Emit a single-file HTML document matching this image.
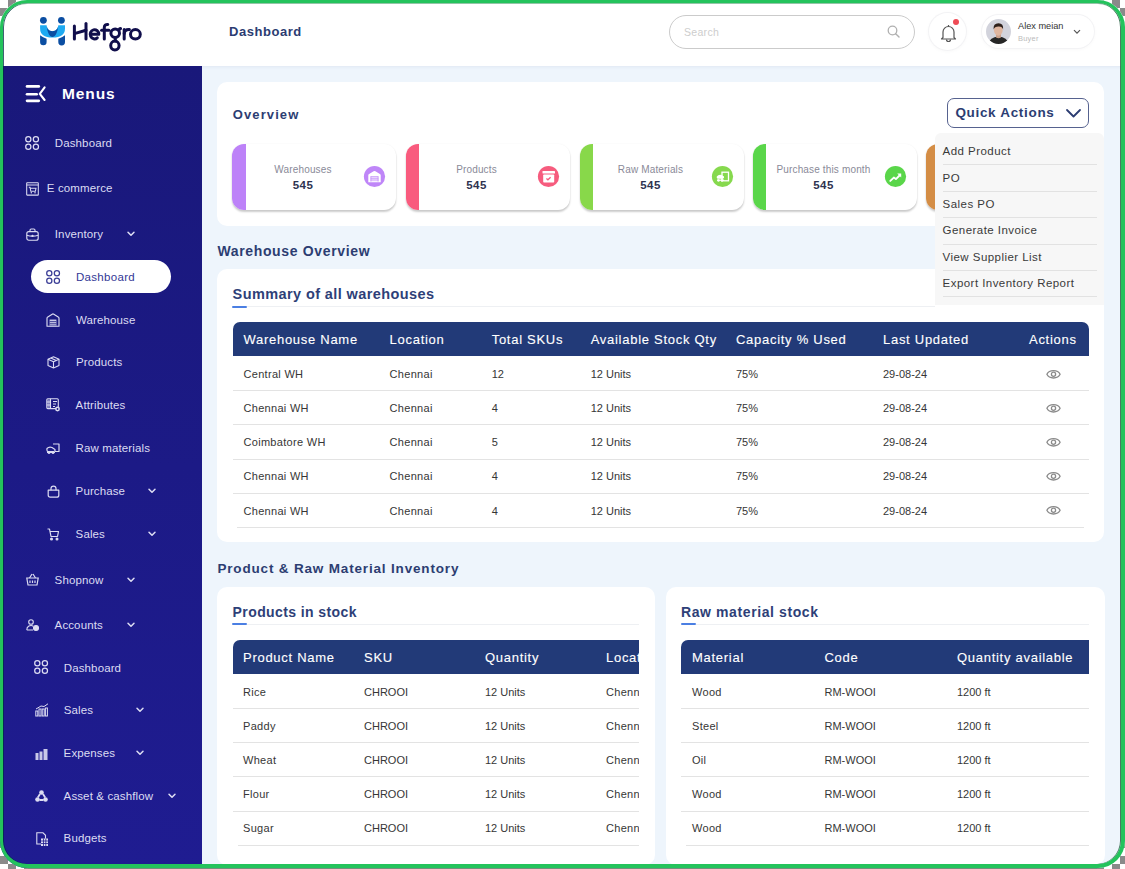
<!DOCTYPE html><html><head><meta charset="utf-8"><style>
*{box-sizing:border-box;margin:0;padding:0}
html,body{width:1125px;height:869px;overflow:hidden}
body{font-family:"Liberation Sans",sans-serif;position:relative;background-color:#fff;
background-image:linear-gradient(45deg,#8a8a8a 25%,transparent 25%,transparent 75%,#8a8a8a 75%),linear-gradient(45deg,#8a8a8a 25%,transparent 25%,transparent 75%,#8a8a8a 75%);
background-size:16px 16px;background-position:0 0,8px 8px}
.abs{position:absolute;overflow:visible}
#app{position:absolute;left:0;top:0;width:1125px;height:868px;border-radius:27px;overflow:hidden;background:#eef5fc}
#frame{position:absolute;left:0;top:0;width:1125px;height:868px;border-radius:27px;border:3px solid #24c35c;border-right-width:4px;border-bottom-width:4px;z-index:100;box-shadow:inset 1px 0 0 rgba(0,45,70,0.75),inset -1px 0 0 rgba(30,90,60,0.8),inset 0 1px 0 rgba(40,140,80,0.5)}
#header{position:absolute;left:0;top:0;width:1125px;height:66px;background:#fff;box-shadow:0 1px 3px rgba(120,140,170,0.12)}
#sidebar{position:absolute;left:0;top:66px;width:202px;height:802px;background:linear-gradient(180deg,#19187a 0%,#1c1a86 50%,#1f1c91 100%)}
.card{position:absolute;background:#fff;border-radius:10px}
.t{position:absolute;white-space:nowrap}
.stat{position:absolute;top:144px;width:164px;height:66px;border-radius:12px;background:#fff;box-shadow:0 2px 2px rgba(0,0,0,0.2),0 0 2px rgba(0,0,0,0.05);overflow:hidden}
.stat .bar{position:absolute;left:0;top:0;width:13.5px;height:66px}
.hdr{position:absolute;background:#223a78;border-radius:7px 7px 0 0}
.sep{position:absolute;height:1px;background:#e3e3e3}
</style></head><body><div id="app">
<div id="header"></div>
<svg class="abs" style="left:36px;top:14px;" width="34" height="34" viewBox="0 0 34 34">
<circle cx="7.4" cy="6.3" r="3.4" fill="#0b4ea2"/><circle cx="25.4" cy="6.3" r="3.4" fill="#0b4ea2"/>
<path d="M4.1 21.2 Q7 23.6 10.6 24.8 V28.1 A3.25 3.25 0 0 1 4.1 28.1 Z" fill="#0b4ea2"/>
<path d="M29 21.2 Q26 23.6 22.3 24.8 V28.1 A3.35 3.35 0 0 0 29 28.1 Z" fill="#0b4ea2"/>
<path d="M4.1 11.2 H10.6 C11.3 19.2 21.6 19.2 22.3 11.2 H29 V14.5 Q29 23.6 16.5 23.6 Q4.1 23.6 4.1 14.5 Z" fill="#1eaaf1" stroke="#fff" stroke-width="1.1" paint-order="stroke"/>
<path d="M10.7 11.6 C11.3 19.6 14 23 16.45 23 C18.9 23 21.6 19.6 22.2 11.6 C21.6 19.2 11.3 19.2 10.7 11.6 Z" fill="#0b4ea2"/>
</svg>
<svg class="abs" style="left:0px;top:0px;" width="160" height="60" viewBox="0 0 160 60"><g fill="none" stroke="#100e4b" stroke-width="3" stroke-linecap="round" stroke-linejoin="round"><path d="M74.4 26 V39"/><path d="M86 23.6 V39"/><path d="M74.4 33.6 L86 30.2"/><path d="M90.2 34.3 H98.8 A4.3 4.6 0 1 0 97.3 37.8"/><path d="M104.3 39 V27.5 Q104.3 24.3 107.8 24.4"/><path d="M101.6 30.2 H109"/><ellipse cx="115.2" cy="33.3" rx="4.3" ry="4.2"/><ellipse cx="114.9" cy="45.6" rx="4.2" ry="4.5"/><path d="M115.3 37.4 V41"/><path d="M119.5 29.5 Q118.8 28.6 120.6 28.6"/><path d="M124.2 39 V29.6"/><path d="M124.2 33.5 Q124.6 29.4 129.4 29.6"/><ellipse cx="135.4" cy="34.3" rx="4.9" ry="4.7"/></g></svg>
<div class="t" style="left:229px;top:25.00px;font-size:13px;line-height:13px;color:#2b3c72;font-weight:bold;letter-spacing:0.55px;">Dashboard</div>
<div class="abs" style="left:668.5px;top:14.5px;width:246px;height:34px;border:1.8px solid #cbcbcb;border-radius:17px;background:#fff"></div>
<div class="t" style="left:684px;top:26.61px;font-size:10.5px;line-height:10.5px;color:#cdcdcd;font-weight:normal;letter-spacing:0.3px;">Search</div>
<svg class="abs" style="left:887px;top:25px;" width="13" height="13" viewBox="0 0 13 13"><circle cx="5.5" cy="5.5" r="4.3" fill="none" stroke="#b0b0b0" stroke-width="1.3"/><path d="M8.7 8.7 L12 12" stroke="#b0b0b0" stroke-width="1.4" stroke-linecap="round"/></svg>
<div class="abs" style="left:929px;top:13px;width:37px;height:37px;border-radius:50%;background:#fff;box-shadow:0 0 0 1px #f3f3f5, 0 1px 4px rgba(0,0,0,0.04)"></div>
<svg class="abs" style="left:940px;top:23px;" width="17" height="20" viewBox="0 0 17 20"><path d="M3 14.5 V9 a5.5 5.5 0 0 1 11 0 V14.5 L15.5 16 H1.5 Z" fill="none" stroke="#555" stroke-width="1.2" stroke-linejoin="round"/><path d="M6.5 16.5 a2 2 0 0 0 4 0" fill="none" stroke="#555" stroke-width="1.2"/><path d="M8.5 2 v1.5" stroke="#555" stroke-width="1.2"/></svg>
<div class="abs" style="left:952.5px;top:18.5px;width:6.5px;height:6.5px;border-radius:50%;background:#ef4b55"></div>
<div class="abs" style="left:982px;top:15px;width:112px;height:33px;border-radius:17px;background:#fff;box-shadow:0 0 0 1px #f3f3f5, 0 1px 4px rgba(0,0,0,0.04)"></div>
<svg class="abs" style="left:986px;top:19px;" width="25" height="25" viewBox="0 0 25 25"><defs><clipPath id="av"><circle cx="12.5" cy="12.5" r="12.5"/></clipPath></defs>
<g clip-path="url(#av)"><rect width="25" height="25" fill="#d2d3dc"/>
<path d="M2.5 25 q1 -7 10 -7.6 q9 0.6 10 7.6z" fill="#262626"/>
<path d="M10 14.5 h5 v4 q-2.5 1.5 -5 0z" fill="#caa08a"/>
<ellipse cx="12.3" cy="11" rx="4.4" ry="5.8" fill="#dfb6a0"/>
<path d="M7.6 10.5 q-0.6 -6.3 4.9 -6.3 q5.2 0 4.6 6.3 q-0.8 -3.2 -4.6 -3 q-4 0.1 -4.9 3z" fill="#2e211b"/></g></svg>
<div class="t" style="left:1018px;top:22.21px;font-size:9.2px;line-height:9.2px;color:#333;font-weight:normal;letter-spacing:0px;">Alex meian</div>
<div class="t" style="left:1018px;top:34.65px;font-size:7.5px;line-height:7.5px;color:#bbb;font-weight:normal;letter-spacing:0.2px;">Buyer</div>
<svg class="abs" style="left:1073px;top:29px;" width="8" height="6" viewBox="0 0 8 6"><path d="M1 1.2 L4 4.2 L7 1.2" fill="none" stroke="#555" stroke-width="1.2"/></svg>
<div id="sidebar"></div>
<svg class="abs" style="left:25px;top:84px;" width="22" height="19" viewBox="0 0 22 19"><rect x="0.7" y="1.1" width="14.4" height="2.7" rx="1.35" fill="#fff"/><rect x="0.7" y="8.9" width="12.3" height="2.7" rx="1.35" fill="#fff"/><rect x="0.7" y="15.5" width="14.4" height="2.7" rx="1.35" fill="#fff"/><path d="M19.6 3.4 L14.8 9.8 L19.6 16" fill="none" stroke="#fff" stroke-width="2.1" stroke-linecap="round" stroke-linejoin="round"/></svg>
<div class="t" style="left:62px;top:85.58px;font-size:15.5px;line-height:15.5px;color:#ffffff;font-weight:bold;letter-spacing:0.9px;">Menus</div>
<svg class="abs" style="left:25px;top:136px;" width="14" height="14" viewBox="0 0 14 14"><g fill="none" stroke="#dcdcf2" stroke-width="1.25"><circle cx="3.3" cy="3.3" r="2.6"/><circle cx="10.9" cy="3.3" r="2.6"/><circle cx="3.3" cy="10.7" r="2.6"/><circle cx="10.9" cy="10.7" r="2.6"/></g></svg>
<div class="t" style="left:54.8px;top:138.07px;font-size:11.5px;line-height:11.5px;color:#dcdcf2;font-weight:normal;letter-spacing:0.12px;">Dashboard</div>
<svg class="abs" style="left:25.5px;top:181.5px;" width="13" height="13.5" viewBox="0 0 13 13.5"><g fill="none" stroke="#dcdcf2" stroke-width="1.05"><rect x="0.7" y="0.7" width="11.6" height="12.4" rx="0.4"/><path d="M0.7 3 H12.3"/><path d="M2.8 5.2 H4 L4.8 9.3 H9.4 L10 6.3 H4.4"/></g><circle cx="5.3" cy="10.8" r="0.75" fill="#dcdcf2"/><circle cx="9" cy="10.8" r="0.75" fill="#dcdcf2"/></svg>
<div class="t" style="left:46.8px;top:183.47px;font-size:11.5px;line-height:11.5px;color:#dcdcf2;font-weight:normal;letter-spacing:0.12px;">E commerce</div>
<svg class="abs" style="left:25.5px;top:227.5px;" width="13" height="13" viewBox="0 0 13 13"><g fill="none" stroke="#dcdcf2" stroke-width="1.15" stroke-linejoin="round"><rect x="0.8" y="3.6" width="11.4" height="8.6" rx="2"/><path d="M4 3.6 V2.2 Q4 1 5.2 1 H7.8 Q9 1 9 2.2 V3.6"/><path d="M0.8 7.2 Q6.5 9 12.2 7.2"/></g><circle cx="6.5" cy="7.9" r="1.1" fill="#dcdcf2"/></svg>
<div class="t" style="left:54.8px;top:229.07px;font-size:11.5px;line-height:11.5px;color:#dcdcf2;font-weight:normal;letter-spacing:0.12px;">Inventory</div>
<svg class="abs" style="left:127px;top:231px;" width="8" height="6" viewBox="0 0 8 6"><path d="M1 1.2 L4 4.3 L7 1.2" fill="none" stroke="#dcdcf2" stroke-width="1.5" stroke-linecap="round" stroke-linejoin="round"/></svg>
<div class="abs" style="left:30.7px;top:260px;width:140px;height:33px;border-radius:17px;background:#fff"></div>
<svg class="abs" style="left:46px;top:270px;" width="14" height="14" viewBox="0 0 14 14"><g fill="none" stroke="#3a3d96" stroke-width="1.25"><circle cx="3.3" cy="3.3" r="2.6"/><circle cx="10.9" cy="3.3" r="2.6"/><circle cx="3.3" cy="10.7" r="2.6"/><circle cx="10.9" cy="10.7" r="2.6"/></g></svg>
<div class="t" style="left:76px;top:272.07px;font-size:11.5px;line-height:11.5px;color:#333896;font-weight:normal;letter-spacing:0.3px;">Dashboard</div>
<svg class="abs" style="left:46px;top:312.5px;" width="14" height="14" viewBox="0 0 14 14"><g fill="none" stroke="#dcdcf2" stroke-width="1.15" stroke-linejoin="round"><path d="M1 13.2 V5.2 Q1 4.4 1.8 3.9 L6.2 1.2 Q7 0.7 7.8 1.2 L12.2 3.9 Q13 4.4 13 5.2 V13.2 Z"/></g><rect x="3.6" y="6.6" width="6.8" height="6.6" fill="#dcdcf2"/><path d="M3.6 8.4 H10.4 M3.6 10.3 H10.4 M3.6 12.1 H10.4" stroke="#1b1a80" stroke-width="0.8"/></svg>
<div class="t" style="left:76px;top:315.07px;font-size:11.5px;line-height:11.5px;color:#dcdcf2;font-weight:normal;letter-spacing:0.12px;">Warehouse</div>
<svg class="abs" style="left:46.5px;top:356px;" width="13" height="13" viewBox="0 0 13 13"><g fill="none" stroke="#dcdcf2" stroke-width="1.1" stroke-linejoin="round"><path d="M6.5 0.8 L12 3.3 V9.5 L6.5 12 L1 9.5 V3.3 Z"/><path d="M1 3.3 L6.5 5.8 L12 3.3 M6.5 5.8 V12 M3.8 2 L9.2 4.6"/></g></svg>
<div class="t" style="left:76px;top:357.07px;font-size:11.5px;line-height:11.5px;color:#dcdcf2;font-weight:normal;letter-spacing:0.12px;">Products</div>
<svg class="abs" style="left:46px;top:398px;" width="15" height="13" viewBox="0 0 15 13"><g fill="none" stroke="#dcdcf2" stroke-width="1.1"><rect x="0.8" y="0.8" width="11.5" height="9.8" rx="1"/><path d="M4.5 0.8 V10.6 M0.8 4 H4.5 M0.8 7 H4.5 M7 3.5 H11 M7 6 H10 M7 8.5 H9"/></g><rect x="1.5" y="1.5" width="2.4" height="8.4" fill="#dcdcf2" opacity="0.55"/><circle cx="11.5" cy="11" r="2.4" fill="#dcdcf2"/><circle cx="11.5" cy="11" r="0.9" fill="#1b1a80"/></svg>
<div class="t" style="left:75.6px;top:400.07px;font-size:11.5px;line-height:11.5px;color:#dcdcf2;font-weight:normal;letter-spacing:0.12px;">Attributes</div>
<svg class="abs" style="left:46px;top:442.5px;" width="14" height="11" viewBox="0 0 14 11"><g fill="none" stroke="#dcdcf2" stroke-width="1.2" stroke-linejoin="round"><path d="M7 1 H13 V8.5 H9"/><path d="M1 5.5 Q3 3.5 6 4.5 L9 6.5 Q9.5 8 8 8.5 H1.5 Q0.5 7 1 5.5 Z"/><path d="M1 9.5 H9"/></g><circle cx="3" cy="9.8" r="1.2" fill="#dcdcf2"/><circle cx="7" cy="9.8" r="1.2" fill="#dcdcf2"/></svg>
<div class="t" style="left:75.6px;top:443.07px;font-size:11.5px;line-height:11.5px;color:#dcdcf2;font-weight:normal;letter-spacing:0.12px;">Raw materials</div>
<svg class="abs" style="left:46.5px;top:484.5px;" width="13" height="13" viewBox="0 0 13 13"><g fill="none" stroke="#dcdcf2" stroke-width="1.2" stroke-linejoin="round"><path d="M1.2 5.2 H11.8 V10.2 Q11.8 12.2 9.8 12.2 H3.2 Q1.2 12.2 1.2 10.2 Z"/><path d="M4 5.2 V3.6 a2.5 2.5 0 0 1 5 0 V5.2"/></g></svg>
<div class="t" style="left:75.6px;top:486.07px;font-size:11.5px;line-height:11.5px;color:#dcdcf2;font-weight:normal;letter-spacing:0.12px;">Purchase</div>
<svg class="abs" style="left:147.5px;top:488px;" width="8" height="6" viewBox="0 0 8 6"><path d="M1 1.2 L4 4.3 L7 1.2" fill="none" stroke="#dcdcf2" stroke-width="1.5" stroke-linecap="round" stroke-linejoin="round"/></svg>
<svg class="abs" style="left:46.5px;top:527.5px;" width="12" height="12.5" viewBox="0 0 12 12.5"><g fill="none" stroke="#dcdcf2" stroke-width="1.2" stroke-linejoin="round"><path d="M0.5 1 H2.5 L4 8.5 H10.5 L11.5 3.5 H3"/><circle cx="4.5" cy="11" r="0.9" fill="#dcdcf2"/><circle cx="10" cy="11" r="0.9" fill="#dcdcf2"/></g></svg>
<div class="t" style="left:75.6px;top:529.07px;font-size:11.5px;line-height:11.5px;color:#dcdcf2;font-weight:normal;letter-spacing:0.12px;">Sales</div>
<svg class="abs" style="left:147.5px;top:531px;" width="8" height="6" viewBox="0 0 8 6"><path d="M1 1.2 L4 4.3 L7 1.2" fill="none" stroke="#dcdcf2" stroke-width="1.5" stroke-linecap="round" stroke-linejoin="round"/></svg>
<svg class="abs" style="left:25.5px;top:572.5px;" width="13" height="13" viewBox="0 0 13 13"><g fill="none" stroke="#dcdcf2" stroke-width="1.2"><path d="M0.8 5 H12.2 L11 12 H2 Z" fill="none"/><path d="M3.5 5 L6 1 M9.5 5 L7 1"/><path d="M4 7.5 V10 M6.5 7.5 V10 M9 7.5 V10"/></g></svg>
<div class="t" style="left:54.6px;top:574.67px;font-size:11.5px;line-height:11.5px;color:#dcdcf2;font-weight:normal;letter-spacing:0.12px;">Shopnow</div>
<svg class="abs" style="left:127px;top:576.6px;" width="8" height="6" viewBox="0 0 8 6"><path d="M1 1.2 L4 4.3 L7 1.2" fill="none" stroke="#dcdcf2" stroke-width="1.5" stroke-linecap="round" stroke-linejoin="round"/></svg>
<svg class="abs" style="left:25.5px;top:618.5px;" width="13" height="12.5" viewBox="0 0 13 12.5"><g fill="none" stroke="#dcdcf2" stroke-width="1.1"><circle cx="5" cy="3" r="2.3"/><path d="M0.8 11 a4.2 4.2 0 0 1 6.5 -3.8 M0.8 11 H7"/><circle cx="10" cy="9" r="2.5" fill="#dcdcf2"/></g></svg>
<div class="t" style="left:54.6px;top:620.07px;font-size:11.5px;line-height:11.5px;color:#dcdcf2;font-weight:normal;letter-spacing:0.12px;">Accounts</div>
<svg class="abs" style="left:127px;top:622px;" width="8" height="6" viewBox="0 0 8 6"><path d="M1 1.2 L4 4.3 L7 1.2" fill="none" stroke="#dcdcf2" stroke-width="1.5" stroke-linecap="round" stroke-linejoin="round"/></svg>
<svg class="abs" style="left:34px;top:660px;" width="14" height="14" viewBox="0 0 14 14"><g fill="none" stroke="#dcdcf2" stroke-width="1.25"><circle cx="3.3" cy="3.3" r="2.6"/><circle cx="10.9" cy="3.3" r="2.6"/><circle cx="3.3" cy="10.7" r="2.6"/><circle cx="10.9" cy="10.7" r="2.6"/></g></svg>
<div class="t" style="left:63.8px;top:662.77px;font-size:11.5px;line-height:11.5px;color:#dcdcf2;font-weight:normal;letter-spacing:0.12px;">Dashboard</div>
<svg class="abs" style="left:34.5px;top:703px;" width="14" height="14" viewBox="0 0 14 14"><g fill="none" stroke="#dcdcf2" stroke-width="1"><rect x="0.8" y="8" width="2" height="5"/><rect x="4" y="6" width="2" height="7"/><rect x="7.2" y="6" width="2" height="7"/><rect x="10.4" y="5" width="2" height="8"/><path d="M1 6 L6 3 L9 3.5 L13 0.8"/></g></svg>
<div class="t" style="left:63.8px;top:705.07px;font-size:11.5px;line-height:11.5px;color:#dcdcf2;font-weight:normal;letter-spacing:0.12px;">Sales</div>
<svg class="abs" style="left:136px;top:707px;" width="8" height="6" viewBox="0 0 8 6"><path d="M1 1.2 L4 4.3 L7 1.2" fill="none" stroke="#dcdcf2" stroke-width="1.5" stroke-linecap="round" stroke-linejoin="round"/></svg>
<svg class="abs" style="left:34.7px;top:747.5px;" width="13" height="12" viewBox="0 0 13 12"><g fill="#dcdcf2" opacity="0.9"><rect x="0.5" y="5" width="3" height="7"/><rect x="4.5" y="3.5" width="3" height="8.5"/><rect x="8.5" y="1" width="4" height="11"/></g></svg>
<div class="t" style="left:63.6px;top:748.47px;font-size:11.5px;line-height:11.5px;color:#dcdcf2;font-weight:normal;letter-spacing:0.12px;">Expenses</div>
<svg class="abs" style="left:136px;top:750.4px;" width="8" height="6" viewBox="0 0 8 6"><path d="M1 1.2 L4 4.3 L7 1.2" fill="none" stroke="#dcdcf2" stroke-width="1.5" stroke-linecap="round" stroke-linejoin="round"/></svg>
<svg class="abs" style="left:35px;top:789.5px;" width="13" height="12" viewBox="0 0 13 12"><g fill="#dcdcf2"><circle cx="6.5" cy="2.5" r="2.3"/><circle cx="2.5" cy="9.5" r="2.3"/><circle cx="10.5" cy="9.5" r="2.3"/></g><path d="M5 4 L2.8 7.5 M8 4 L10.2 7.5 M4.5 10 H8.5" stroke="#dcdcf2" stroke-width="1.8"/></svg>
<div class="t" style="left:63.6px;top:790.57px;font-size:11.5px;line-height:11.5px;color:#dcdcf2;font-weight:normal;letter-spacing:0.12px;">Asset & cashflow</div>
<svg class="abs" style="left:167.5px;top:792.5px;" width="8" height="6" viewBox="0 0 8 6"><path d="M1 1.2 L4 4.3 L7 1.2" fill="none" stroke="#dcdcf2" stroke-width="1.5" stroke-linecap="round" stroke-linejoin="round"/></svg>
<svg class="abs" style="left:35.5px;top:831.5px;" width="12.5" height="14.5" viewBox="0 0 12.5 14.5"><g fill="none" stroke="#dcdcf2" stroke-width="1.1"><path d="M0.8 0.8 H7 L9.5 3.3 V12 H0.8 Z"/></g><rect x="5" y="6.5" width="7" height="7.5" fill="#dcdcf2"/><path d="M5 9 H12 M5 11.5 H12 M7.5 6.5 V14 M9.8 6.5 V14" stroke="#1e1b8d" stroke-width="0.8"/></svg>
<div class="t" style="left:63.6px;top:833.07px;font-size:11.5px;line-height:11.5px;color:#dcdcf2;font-weight:normal;letter-spacing:0.12px;">Budgets</div>
<div class="card" style="left:217px;top:82px;width:887px;height:144px"></div>
<div class="t" style="left:232.8px;top:107.70px;font-size:13px;line-height:13px;color:#2c3d72;font-weight:bold;letter-spacing:1.1px;">Overview</div>
<div class="stat" style="left:232px"><div class="bar" style="background:#bd82f8"></div></div>
<div class="t" style="left:203.0px;width:200px;text-align:center;top:164.53px;font-size:10px;line-height:10px;color:#8a8a98;font-weight:normal;letter-spacing:0.15px">Warehouses</div>
<div class="t" style="left:203.0px;width:200px;text-align:center;top:179.77px;font-size:11.5px;line-height:11.5px;color:#2e3350;font-weight:bold;letter-spacing:0.5px">545</div>
<svg class="abs" style="left:364px;top:166px;" width="21" height="21" viewBox="0 0 21 21"><circle cx="10.5" cy="10.5" r="10.6" fill="#bf86f8"/><path d="M4.3 16.3 V9.2 Q4.3 8.3 5.1 7.9 L9.6 5.2 Q10.5 4.7 11.4 5.2 L15.9 7.9 Q16.7 8.3 16.7 9.2 V16.3 Z" fill="#fff"/><rect x="6.6" y="10.5" width="7.8" height="5" fill="#f3e6ff"/><path d="M6.6 10.6 H14.4 M6.6 12.3 H14.4 M6.6 14 H14.4 M6.9 10.5 V15.5 M14.1 10.5 V15.5" stroke="#bf86f8" stroke-width="0.7"/></svg>
<div class="stat" style="left:405.5px"><div class="bar" style="background:#f95b7e"></div></div>
<div class="t" style="left:376.5px;width:200px;text-align:center;top:164.53px;font-size:10px;line-height:10px;color:#8a8a98;font-weight:normal;letter-spacing:0.15px">Products</div>
<div class="t" style="left:376.5px;width:200px;text-align:center;top:179.77px;font-size:11.5px;line-height:11.5px;color:#2e3350;font-weight:bold;letter-spacing:0.5px">545</div>
<svg class="abs" style="left:537.5px;top:166px;" width="21" height="21" viewBox="0 0 21 21"><circle cx="10.5" cy="10.5" r="10.6" fill="#f65c7e"/><rect x="4.5" y="5" width="12.5" height="2.6" rx="0.6" fill="#fff"/><rect x="5.2" y="8.4" width="11" height="8.2" rx="0.8" fill="#fff"/><path d="M8.4 12.6 L9.9 13.8 L12.6 11.3" fill="none" stroke="#f65c7e" stroke-width="1.3"/></svg>
<div class="stat" style="left:579.5px"><div class="bar" style="background:#88d84a"></div></div>
<div class="t" style="left:550.5px;width:200px;text-align:center;top:164.53px;font-size:10px;line-height:10px;color:#8a8a98;font-weight:normal;letter-spacing:0.15px">Raw Materials</div>
<div class="t" style="left:550.5px;width:200px;text-align:center;top:179.77px;font-size:11.5px;line-height:11.5px;color:#2e3350;font-weight:bold;letter-spacing:0.5px">545</div>
<svg class="abs" style="left:711.5px;top:166px;" width="21" height="21" viewBox="0 0 21 21"><circle cx="10.5" cy="10.5" r="10.6" fill="#86d94e"/><rect x="10" y="6.2" width="6.5" height="8.6" fill="none" stroke="#fff" stroke-width="1.3"/><path d="M4.8 10.5 Q6.5 8.2 9.5 9 L12 10.6 Q12.5 12.6 10.8 12.8 H5.5 Q4.3 11.8 4.8 10.5 Z" fill="#fff"/><path d="M5 14.2 H12" stroke="#fff" stroke-width="1.3"/><circle cx="6.5" cy="14.5" r="1.2" fill="#fff"/><circle cx="10" cy="14.5" r="1.2" fill="#fff"/></svg>
<div class="stat" style="left:752.5px"><div class="bar" style="background:#5ad64a"></div></div>
<div class="t" style="left:723.5px;width:200px;text-align:center;top:164.53px;font-size:10px;line-height:10px;color:#8a8a98;font-weight:normal;letter-spacing:0.15px">Purchase this month</div>
<div class="t" style="left:723.5px;width:200px;text-align:center;top:179.77px;font-size:11.5px;line-height:11.5px;color:#2e3350;font-weight:bold;letter-spacing:0.5px">545</div>
<svg class="abs" style="left:884.5px;top:166px;" width="21" height="21" viewBox="0 0 21 21"><circle cx="10.5" cy="10.5" r="10.6" fill="#5ad64a"/><path d="M5.3 14.9 L8.8 11.6 L10.9 13.1 L14.8 9.3" fill="none" stroke="#fff" stroke-width="1.9" stroke-linejoin="round" stroke-linecap="round"/><path d="M12.2 7.6 H16.2 V11.6 Z" fill="#fff"/></svg>
<div class="stat" style="left:926px"><div class="bar" style="background:#d48d45"></div></div>
<div class="abs" style="left:947px;top:98px;width:142px;height:30px;border:1px solid #56628f;border-radius:7px;background:#fff"></div>
<div class="t" style="left:955.4px;top:105.87px;font-size:13.5px;line-height:13.5px;color:#2c3d72;font-weight:bold;letter-spacing:0.68px;">Quick Actions</div>
<svg class="abs" style="left:1065px;top:108px;" width="17" height="11" viewBox="0 0 17 11"><path d="M2 2 L8.5 8.5 L15 2" fill="none" stroke="#2c3d72" stroke-width="1.8" stroke-linecap="round" stroke-linejoin="round"/></svg>
<div class="t" style="left:217.4px;top:243.85px;font-size:14px;line-height:14px;color:#2c3d72;font-weight:bold;letter-spacing:0.65px;">Warehouse Overview</div>
<div class="card" style="left:217px;top:269px;width:887px;height:273px"></div>
<div class="t" style="left:232.6px;top:286.73px;font-size:14.5px;line-height:14.5px;color:#2e3f78;font-weight:bold;letter-spacing:0.4px;">Summary of all warehouses</div>
<div class="abs" style="left:247px;top:306px;width:688px;height:1px;background:#eef0f3"></div>
<div class="abs" style="left:232px;top:305.5px;width:15px;height:2px;border-radius:1px;background:#4b7fe3"></div>
<div class="hdr" style="left:233px;top:322px;width:856px;height:34px"></div>
<div class="t" style="left:243.5px;top:333.40px;font-size:13px;line-height:13px;color:#ffffff;font-weight:normal;letter-spacing:0.72px;-webkit-text-stroke:0.12px #fff">Warehouse Name</div>
<div class="t" style="left:389.6px;top:333.40px;font-size:13px;line-height:13px;color:#ffffff;font-weight:normal;letter-spacing:0.72px;-webkit-text-stroke:0.12px #fff">Location</div>
<div class="t" style="left:491.7px;top:333.40px;font-size:13px;line-height:13px;color:#ffffff;font-weight:normal;letter-spacing:0.72px;-webkit-text-stroke:0.12px #fff">Total SKUs</div>
<div class="t" style="left:590.7px;top:333.40px;font-size:13px;line-height:13px;color:#ffffff;font-weight:normal;letter-spacing:0.72px;-webkit-text-stroke:0.12px #fff">Available Stock Qty</div>
<div class="t" style="left:736px;top:333.40px;font-size:13px;line-height:13px;color:#ffffff;font-weight:normal;letter-spacing:0.72px;-webkit-text-stroke:0.12px #fff">Capacity % Used</div>
<div class="t" style="left:883px;top:333.40px;font-size:13px;line-height:13px;color:#ffffff;font-weight:normal;letter-spacing:0.72px;-webkit-text-stroke:0.12px #fff">Last Updated</div>
<div class="t" style="left:1029px;top:333.40px;font-size:13px;line-height:13px;color:#ffffff;font-weight:normal;letter-spacing:0.72px;-webkit-text-stroke:0.12px #fff">Actions</div>
<div class="t" style="left:243.5px;top:368.89px;font-size:11px;line-height:11px;color:#363636;font-weight:normal;letter-spacing:0.3px;">Central WH</div>
<div class="t" style="left:389.6px;top:368.89px;font-size:11px;line-height:11px;color:#363636;font-weight:normal;letter-spacing:0.3px;">Chennai</div>
<div class="t" style="left:491.7px;top:368.89px;font-size:11px;line-height:11px;color:#363636;font-weight:normal;letter-spacing:0px;">12</div>
<div class="t" style="left:590.7px;top:368.89px;font-size:11px;line-height:11px;color:#363636;font-weight:normal;letter-spacing:0px;">12 Units</div>
<div class="t" style="left:736px;top:368.89px;font-size:11px;line-height:11px;color:#363636;font-weight:normal;letter-spacing:0px;">75%</div>
<div class="t" style="left:883px;top:368.89px;font-size:11px;line-height:11px;color:#363636;font-weight:normal;letter-spacing:0px;">29-08-24</div>
<svg class="abs" style="left:1046.2px;top:368.5px;" width="15" height="11" viewBox="0 0 15 11"><path d="M0.9 5.3 C3.2 0.4 11.8 0.4 14.1 5.3 C11.8 10.2 3.2 10.2 0.9 5.3 Z" fill="none" stroke="#8a8a8a" stroke-width="1.3"/><circle cx="7.5" cy="5.3" r="2.1" fill="none" stroke="#8a8a8a" stroke-width="1.3"/></svg>
<div class="sep" style="left:233px;top:390px;width:856px"></div>
<div class="t" style="left:243.5px;top:403.09px;font-size:11px;line-height:11px;color:#363636;font-weight:normal;letter-spacing:0.3px;">Chennai WH</div>
<div class="t" style="left:389.6px;top:403.09px;font-size:11px;line-height:11px;color:#363636;font-weight:normal;letter-spacing:0.3px;">Chennai</div>
<div class="t" style="left:491.7px;top:403.09px;font-size:11px;line-height:11px;color:#363636;font-weight:normal;letter-spacing:0px;">4</div>
<div class="t" style="left:590.7px;top:403.09px;font-size:11px;line-height:11px;color:#363636;font-weight:normal;letter-spacing:0px;">12 Units</div>
<div class="t" style="left:736px;top:403.09px;font-size:11px;line-height:11px;color:#363636;font-weight:normal;letter-spacing:0px;">75%</div>
<div class="t" style="left:883px;top:403.09px;font-size:11px;line-height:11px;color:#363636;font-weight:normal;letter-spacing:0px;">29-08-24</div>
<svg class="abs" style="left:1046.2px;top:402.7px;" width="15" height="11" viewBox="0 0 15 11"><path d="M0.9 5.3 C3.2 0.4 11.8 0.4 14.1 5.3 C11.8 10.2 3.2 10.2 0.9 5.3 Z" fill="none" stroke="#8a8a8a" stroke-width="1.3"/><circle cx="7.5" cy="5.3" r="2.1" fill="none" stroke="#8a8a8a" stroke-width="1.3"/></svg>
<div class="sep" style="left:233px;top:424px;width:856px"></div>
<div class="t" style="left:243.5px;top:437.29px;font-size:11px;line-height:11px;color:#363636;font-weight:normal;letter-spacing:0.3px;">Coimbatore WH</div>
<div class="t" style="left:389.6px;top:437.29px;font-size:11px;line-height:11px;color:#363636;font-weight:normal;letter-spacing:0.3px;">Chennai</div>
<div class="t" style="left:491.7px;top:437.29px;font-size:11px;line-height:11px;color:#363636;font-weight:normal;letter-spacing:0px;">5</div>
<div class="t" style="left:590.7px;top:437.29px;font-size:11px;line-height:11px;color:#363636;font-weight:normal;letter-spacing:0px;">12 Units</div>
<div class="t" style="left:736px;top:437.29px;font-size:11px;line-height:11px;color:#363636;font-weight:normal;letter-spacing:0px;">75%</div>
<div class="t" style="left:883px;top:437.29px;font-size:11px;line-height:11px;color:#363636;font-weight:normal;letter-spacing:0px;">29-08-24</div>
<svg class="abs" style="left:1046.2px;top:436.90000000000003px;" width="15" height="11" viewBox="0 0 15 11"><path d="M0.9 5.3 C3.2 0.4 11.8 0.4 14.1 5.3 C11.8 10.2 3.2 10.2 0.9 5.3 Z" fill="none" stroke="#8a8a8a" stroke-width="1.3"/><circle cx="7.5" cy="5.3" r="2.1" fill="none" stroke="#8a8a8a" stroke-width="1.3"/></svg>
<div class="sep" style="left:233px;top:459px;width:856px"></div>
<div class="t" style="left:243.5px;top:471.49px;font-size:11px;line-height:11px;color:#363636;font-weight:normal;letter-spacing:0.3px;">Chennai WH</div>
<div class="t" style="left:389.6px;top:471.49px;font-size:11px;line-height:11px;color:#363636;font-weight:normal;letter-spacing:0.3px;">Chennai</div>
<div class="t" style="left:491.7px;top:471.49px;font-size:11px;line-height:11px;color:#363636;font-weight:normal;letter-spacing:0px;">4</div>
<div class="t" style="left:590.7px;top:471.49px;font-size:11px;line-height:11px;color:#363636;font-weight:normal;letter-spacing:0px;">12 Units</div>
<div class="t" style="left:736px;top:471.49px;font-size:11px;line-height:11px;color:#363636;font-weight:normal;letter-spacing:0px;">75%</div>
<div class="t" style="left:883px;top:471.49px;font-size:11px;line-height:11px;color:#363636;font-weight:normal;letter-spacing:0px;">29-08-24</div>
<svg class="abs" style="left:1046.2px;top:471.1px;" width="15" height="11" viewBox="0 0 15 11"><path d="M0.9 5.3 C3.2 0.4 11.8 0.4 14.1 5.3 C11.8 10.2 3.2 10.2 0.9 5.3 Z" fill="none" stroke="#8a8a8a" stroke-width="1.3"/><circle cx="7.5" cy="5.3" r="2.1" fill="none" stroke="#8a8a8a" stroke-width="1.3"/></svg>
<div class="sep" style="left:233px;top:493px;width:856px"></div>
<div class="t" style="left:243.5px;top:505.69px;font-size:11px;line-height:11px;color:#363636;font-weight:normal;letter-spacing:0.3px;">Chennai WH</div>
<div class="t" style="left:389.6px;top:505.69px;font-size:11px;line-height:11px;color:#363636;font-weight:normal;letter-spacing:0.3px;">Chennai</div>
<div class="t" style="left:491.7px;top:505.69px;font-size:11px;line-height:11px;color:#363636;font-weight:normal;letter-spacing:0px;">4</div>
<div class="t" style="left:590.7px;top:505.69px;font-size:11px;line-height:11px;color:#363636;font-weight:normal;letter-spacing:0px;">12 Units</div>
<div class="t" style="left:736px;top:505.69px;font-size:11px;line-height:11px;color:#363636;font-weight:normal;letter-spacing:0px;">75%</div>
<div class="t" style="left:883px;top:505.69px;font-size:11px;line-height:11px;color:#363636;font-weight:normal;letter-spacing:0px;">29-08-24</div>
<svg class="abs" style="left:1046.2px;top:505.3px;" width="15" height="11" viewBox="0 0 15 11"><path d="M0.9 5.3 C3.2 0.4 11.8 0.4 14.1 5.3 C11.8 10.2 3.2 10.2 0.9 5.3 Z" fill="none" stroke="#8a8a8a" stroke-width="1.3"/><circle cx="7.5" cy="5.3" r="2.1" fill="none" stroke="#8a8a8a" stroke-width="1.3"/></svg>
<div class="sep" style="left:237px;top:527px;width:847px"></div>
<div class="t" style="left:217.4px;top:562.07px;font-size:13.5px;line-height:13.5px;color:#2c3d72;font-weight:bold;letter-spacing:0.83px;">Product &amp; Raw Material Inventory</div>
<div class="card" style="left:217px;top:586.5px;width:438px;height:278px"></div>
<div class="card" style="left:666px;top:586.5px;width:439px;height:278px"></div>
<div class="t" style="left:232.6px;top:605.15px;font-size:14px;line-height:14px;color:#2e3f78;font-weight:bold;letter-spacing:0.4px;">Products in stock</div>
<div class="t" style="left:681px;top:605.15px;font-size:14px;line-height:14px;color:#2e3f78;font-weight:bold;letter-spacing:0.6px;">Raw material stock</div>
<div class="abs" style="left:247px;top:623.5px;width:392px;height:1px;background:#eef0f3"></div>
<div class="abs" style="left:232px;top:623px;width:15px;height:2px;border-radius:1px;background:#4b7fe3"></div>
<div class="abs" style="left:696px;top:623.5px;width:393px;height:1px;background:#eef0f3"></div>
<div class="abs" style="left:681px;top:623px;width:15px;height:2px;border-radius:1px;background:#4b7fe3"></div>
<div class="abs" style="left:233px;top:640px;width:406px;height:215px;overflow:hidden">
<div class="hdr" style="left:0;top:0;width:500px;height:34px"></div>
<div class="t" style="left:10px;top:11.40px;font-size:13px;line-height:13px;color:#fff;font-weight:normal;letter-spacing:0.72px;-webkit-text-stroke:0.12px #fff">Product Name</div>
<div class="t" style="left:131px;top:11.40px;font-size:13px;line-height:13px;color:#fff;font-weight:normal;letter-spacing:0.72px;-webkit-text-stroke:0.12px #fff">SKU</div>
<div class="t" style="left:252px;top:11.40px;font-size:13px;line-height:13px;color:#fff;font-weight:normal;letter-spacing:0.72px;-webkit-text-stroke:0.12px #fff">Quantity</div>
<div class="t" style="left:373px;top:11.40px;font-size:13px;line-height:13px;color:#fff;font-weight:normal;letter-spacing:0.72px;-webkit-text-stroke:0.12px #fff">Location</div>
<div class="t" style="left:10px;top:46.69px;font-size:11px;line-height:11px;color:#363636;font-weight:normal;letter-spacing:0.3px;">Rice</div>
<div class="t" style="left:131px;top:46.69px;font-size:11px;line-height:11px;color:#363636;font-weight:normal;letter-spacing:0px;">CHROOI</div>
<div class="t" style="left:252px;top:46.69px;font-size:11px;line-height:11px;color:#363636;font-weight:normal;letter-spacing:0px;">12 Units</div>
<div class="t" style="left:373px;top:46.69px;font-size:11px;line-height:11px;color:#363636;font-weight:normal;letter-spacing:0.3px;">Chennai</div>
<div class="sep" style="left:0px;top:68.0px;width:406px"></div>
<div class="t" style="left:10px;top:80.89px;font-size:11px;line-height:11px;color:#363636;font-weight:normal;letter-spacing:0.3px;">Paddy</div>
<div class="t" style="left:131px;top:80.89px;font-size:11px;line-height:11px;color:#363636;font-weight:normal;letter-spacing:0px;">CHROOI</div>
<div class="t" style="left:252px;top:80.89px;font-size:11px;line-height:11px;color:#363636;font-weight:normal;letter-spacing:0px;">12 Units</div>
<div class="t" style="left:373px;top:80.89px;font-size:11px;line-height:11px;color:#363636;font-weight:normal;letter-spacing:0.3px;">Chennai</div>
<div class="sep" style="left:0px;top:102.2px;width:406px"></div>
<div class="t" style="left:10px;top:115.09px;font-size:11px;line-height:11px;color:#363636;font-weight:normal;letter-spacing:0.3px;">Wheat</div>
<div class="t" style="left:131px;top:115.09px;font-size:11px;line-height:11px;color:#363636;font-weight:normal;letter-spacing:0px;">CHROOI</div>
<div class="t" style="left:252px;top:115.09px;font-size:11px;line-height:11px;color:#363636;font-weight:normal;letter-spacing:0px;">12 Units</div>
<div class="t" style="left:373px;top:115.09px;font-size:11px;line-height:11px;color:#363636;font-weight:normal;letter-spacing:0.3px;">Chennai</div>
<div class="sep" style="left:0px;top:136.4px;width:406px"></div>
<div class="t" style="left:10px;top:149.29px;font-size:11px;line-height:11px;color:#363636;font-weight:normal;letter-spacing:0.3px;">Flour</div>
<div class="t" style="left:131px;top:149.29px;font-size:11px;line-height:11px;color:#363636;font-weight:normal;letter-spacing:0px;">CHROOI</div>
<div class="t" style="left:252px;top:149.29px;font-size:11px;line-height:11px;color:#363636;font-weight:normal;letter-spacing:0px;">12 Units</div>
<div class="t" style="left:373px;top:149.29px;font-size:11px;line-height:11px;color:#363636;font-weight:normal;letter-spacing:0.3px;">Chennai</div>
<div class="sep" style="left:0px;top:170.6px;width:406px"></div>
<div class="t" style="left:10px;top:183.49px;font-size:11px;line-height:11px;color:#363636;font-weight:normal;letter-spacing:0.3px;">Sugar</div>
<div class="t" style="left:131px;top:183.49px;font-size:11px;line-height:11px;color:#363636;font-weight:normal;letter-spacing:0px;">CHROOI</div>
<div class="t" style="left:252px;top:183.49px;font-size:11px;line-height:11px;color:#363636;font-weight:normal;letter-spacing:0px;">12 Units</div>
<div class="t" style="left:373px;top:183.49px;font-size:11px;line-height:11px;color:#363636;font-weight:normal;letter-spacing:0.3px;">Chennai</div>
<div class="sep" style="left:5px;top:204.8px;width:406px"></div>
</div>
<div class="hdr" style="left:681px;top:640px;width:408px;height:34px;border-radius:7px 0 0 0"></div>
<div class="t" style="left:692px;top:651.40px;font-size:13px;line-height:13px;color:#fff;font-weight:normal;letter-spacing:0.72px;-webkit-text-stroke:0.12px #fff">Material</div>
<div class="t" style="left:824.5px;top:651.40px;font-size:13px;line-height:13px;color:#fff;font-weight:normal;letter-spacing:0.72px;-webkit-text-stroke:0.12px #fff">Code</div>
<div class="t" style="left:957px;top:651.40px;font-size:13px;line-height:13px;color:#fff;font-weight:normal;letter-spacing:0.72px;-webkit-text-stroke:0.12px #fff">Quantity available</div>
<div class="t" style="left:692px;top:686.69px;font-size:11px;line-height:11px;color:#363636;font-weight:normal;letter-spacing:0.3px;">Wood</div>
<div class="t" style="left:824.5px;top:686.69px;font-size:11px;line-height:11px;color:#363636;font-weight:normal;letter-spacing:0px;">RM-WOOI</div>
<div class="t" style="left:957px;top:686.69px;font-size:11px;line-height:11px;color:#363636;font-weight:normal;letter-spacing:0px;">1200 ft</div>
<div class="sep" style="left:681px;top:708.0px;width:408px"></div>
<div class="t" style="left:692px;top:720.89px;font-size:11px;line-height:11px;color:#363636;font-weight:normal;letter-spacing:0.3px;">Steel</div>
<div class="t" style="left:824.5px;top:720.89px;font-size:11px;line-height:11px;color:#363636;font-weight:normal;letter-spacing:0px;">RM-WOOI</div>
<div class="t" style="left:957px;top:720.89px;font-size:11px;line-height:11px;color:#363636;font-weight:normal;letter-spacing:0px;">1200 ft</div>
<div class="sep" style="left:681px;top:742.2px;width:408px"></div>
<div class="t" style="left:692px;top:755.09px;font-size:11px;line-height:11px;color:#363636;font-weight:normal;letter-spacing:0.3px;">Oil</div>
<div class="t" style="left:824.5px;top:755.09px;font-size:11px;line-height:11px;color:#363636;font-weight:normal;letter-spacing:0px;">RM-WOOI</div>
<div class="t" style="left:957px;top:755.09px;font-size:11px;line-height:11px;color:#363636;font-weight:normal;letter-spacing:0px;">1200 ft</div>
<div class="sep" style="left:681px;top:776.4px;width:408px"></div>
<div class="t" style="left:692px;top:789.29px;font-size:11px;line-height:11px;color:#363636;font-weight:normal;letter-spacing:0.3px;">Wood</div>
<div class="t" style="left:824.5px;top:789.29px;font-size:11px;line-height:11px;color:#363636;font-weight:normal;letter-spacing:0px;">RM-WOOI</div>
<div class="t" style="left:957px;top:789.29px;font-size:11px;line-height:11px;color:#363636;font-weight:normal;letter-spacing:0px;">1200 ft</div>
<div class="sep" style="left:681px;top:810.6px;width:408px"></div>
<div class="t" style="left:692px;top:823.49px;font-size:11px;line-height:11px;color:#363636;font-weight:normal;letter-spacing:0.3px;">Wood</div>
<div class="t" style="left:824.5px;top:823.49px;font-size:11px;line-height:11px;color:#363636;font-weight:normal;letter-spacing:0px;">RM-WOOI</div>
<div class="t" style="left:957px;top:823.49px;font-size:11px;line-height:11px;color:#363636;font-weight:normal;letter-spacing:0px;">1200 ft</div>
<div class="sep" style="left:686px;top:844.8px;width:403px"></div>
<div class="abs" style="left:935px;top:133px;width:169px;height:172px;background:#f7f7f7;border-radius:6px 6px 0 0"></div>
<div class="t" style="left:942.6px;top:146.27px;font-size:11.5px;line-height:11.5px;color:#3a3a3a;font-weight:normal;letter-spacing:0.45px;">Add Product</div>
<div class="abs" style="left:942.6px;top:164.3px;width:154px;height:1px;background:#e2e2e2"></div>
<div class="t" style="left:942.6px;top:172.62px;font-size:11.5px;line-height:11.5px;color:#3a3a3a;font-weight:normal;letter-spacing:0.45px;">PO</div>
<div class="abs" style="left:942.6px;top:190.7px;width:154px;height:1px;background:#e2e2e2"></div>
<div class="t" style="left:942.6px;top:198.97px;font-size:11.5px;line-height:11.5px;color:#3a3a3a;font-weight:normal;letter-spacing:0.45px;">Sales PO</div>
<div class="abs" style="left:942.6px;top:217.1px;width:154px;height:1px;background:#e2e2e2"></div>
<div class="t" style="left:942.6px;top:225.32px;font-size:11.5px;line-height:11.5px;color:#3a3a3a;font-weight:normal;letter-spacing:0.45px;">Generate Invoice</div>
<div class="abs" style="left:942.6px;top:243.5px;width:154px;height:1px;background:#e2e2e2"></div>
<div class="t" style="left:942.6px;top:251.67px;font-size:11.5px;line-height:11.5px;color:#3a3a3a;font-weight:normal;letter-spacing:0.45px;">View Supplier List</div>
<div class="abs" style="left:942.6px;top:269.9px;width:154px;height:1px;background:#e2e2e2"></div>
<div class="t" style="left:942.6px;top:278.02px;font-size:11.5px;line-height:11.5px;color:#3a3a3a;font-weight:normal;letter-spacing:0.45px;">Export Inventory Report</div>
<div class="abs" style="left:942.6px;top:296.3px;width:154px;height:1px;background:#e2e2e2"></div>
</div><div id="frame"></div><div class="abs" style="left:28px;top:868px;width:1069px;height:1px;background:#72917d;z-index:101"></div></body></html>
